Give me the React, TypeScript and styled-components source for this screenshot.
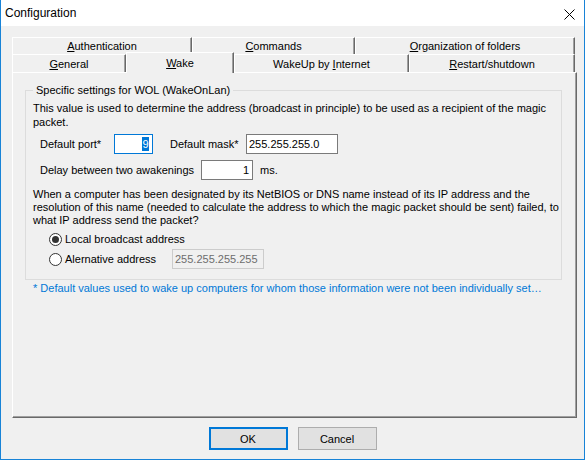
import * as React from 'react';
import styled, { createGlobalStyle } from 'styled-components';

const GlobalStyle = createGlobalStyle`
	html, body {
		margin: 0;
		padding: 0;
		background: #f0f0f0;
	}
	body {
		font-family: 'Liberation Sans', Arial, sans-serif;
		font-size: 11px;
		color: #000;
	}
`;

const topTabs = [
	{ w: 180, label: <><u>A</u>uthentication</> },
	{ w: 163, label: <><u>C</u>ommands</> },
	{ w: 220, label: <><u>O</u>rganization of folders</> },
];

const bottomTabs = [
	{ w: 114, label: <><u>G</u>eneral</> },
	{ w: 108, label: <><u>W</u>ake</>, active: true },
	{ w: 175, label: <>WakeUp by <u>I</u>nternet</> },
	{ w: 166, label: <><u>R</u>estart/shutdown</> },
];

export default function App() {
	return (
		<>
			<GlobalStyle />
			<Window>
				<TitleBar>
					<span>Configuration</span>
					<CloseIcon width="11" height="11" viewBox="0 0 11 11">
						<path d="M0.5 0.5 L10.5 10.5 M10.5 0.5 L0.5 10.5" stroke="#000" strokeWidth="1" />
					</CloseIcon>
				</TitleBar>
				<Body>
					<TabRow $height={17}>
						{topTabs.map((t, i) => (
							<Tab key={i} $width={t.w}>
								<span>{t.label}</span>
							</Tab>
						))}
					</TabRow>
					<TabRow $height={18}>
						{bottomTabs.map((t, i) => (
							<Tab key={i} $width={t.w} $active={t.active}>
								<span>{t.label}</span>
							</Tab>
						))}
					</TabRow>
					<Panel>
						<Group>
							<Legend>Specific settings for WOL (WakeOnLan)</Legend>
							<Para $lh={14} $top={2}>
								This value is used to determine the address (broadcast in principle) to be used as a recipient of the magic
								<br />
								packet.
							</Para>
							<FieldRow $top={5}>
								<Label $width={74}>Default port*</Label>
								<Field $width={39} $focused $right>
									<Selected>9</Selected>
								</Field>
								<Label $width={76} $left={17}>
									Default mask*
								</Label>
								<Field $width={92}>255.255.255.0</Field>
							</FieldRow>
							<FieldRow $top={6}>
								<Label $width={161}>Delay between two awakenings</Label>
								<Field $width={52} $right>
									1
								</Field>
								<Label $left={7}>ms.</Label>
							</FieldRow>
							<Para $lh={13} $top={8}>
								When a computer has been designated by its NetBIOS or DNS name instead of its IP address and the
								<br />
								resolution of this name (needed to calculate the address to which the magic packet should be sent) failed, to
								<br />
								what IP address send the packet?
							</Para>
							<RadioRow $top={2}>
								<Radio $checked />
								<RadioLabel>Local broadcast address</RadioLabel>
							</RadioRow>
							<RadioRow>
								<Radio />
								<RadioLabel $width={107}>Alernative address</RadioLabel>
								<Field $width={92} $disabled>
									255.255.255.255
								</Field>
							</RadioRow>
						</Group>
						<Note>* Default values used to wake up computers for whom those information were not been individually set…</Note>
					</Panel>
					<Buttons>
						<Button $default>OK</Button>
						<Button>Cancel</Button>
					</Buttons>
				</Body>
			</Window>
		</>
	);
}

const Window = styled.div`
	width: 585px;
	height: 460px;
	box-sizing: border-box;
	border: 1px solid #1883d7;
	border-top: none;
	background: #f0f0f0;
	display: flex;
	flex-direction: column;
	overflow: hidden;
`;

const TitleBar = styled.div`
	height: 26px;
	flex-shrink: 0;
	background: #fff;
	display: flex;
	align-items: center;
	justify-content: space-between;
	padding: 0 9px 0 4px;
	font-size: 12px;
`;

const CloseIcon = styled.svg`
	display: block;
	margin-top: 2px;
`;

const Body = styled.div`
	display: flex;
	flex-direction: column;
	padding: 11px 0 0 11px;
`;

const TabRow = styled.div<{ $height: number }>`
	display: flex;
	height: ${p => p.$height}px;
	width: 563px;
`;

const Tab = styled.div<{ $width: number; $active?: boolean }>`
	box-sizing: border-box;
	width: ${p => p.$width}px;
	${p => (p.$active ? 'height: 21px; margin-top: -2px; padding-bottom: 1px;' : '')}
	position: relative;
	z-index: ${p => (p.$active ? 2 : 1)};
	background: #f0f0f0;
	border-top: 1px solid #fff;
	border-left: 1px solid #fff;
	border-right: 1px solid #696969;
	box-shadow: inset -1px 0 #a0a0a0;
	display: flex;
	align-items: center;
	justify-content: center;
	white-space: nowrap;
	line-height: 14px;
	u {
		text-decoration-thickness: 1px;
		text-underline-offset: 1px;
	}
`;

const Panel = styled.div`
	box-sizing: border-box;
	width: 565px;
	height: 346px;
	border-top: 1px solid #fff;
	border-left: 1px solid #fff;
	border-right: 1px solid #696969;
	border-bottom: 1px solid #696969;
	box-shadow: inset -1px -1px #a0a0a0;
	padding: 10px 14px 0 12px;
	display: flex;
	flex-direction: column;
`;

const Group = styled.fieldset`
	margin: 0;
	border: 1px solid #dcdcdc;
	padding: 1px 7px 10px 7px;
	min-width: 0;
`;

const Legend = styled.legend`
	padding: 0 3px;
	line-height: 15px;
	white-space: nowrap;
`;

const Para = styled.p<{ $lh: number; $top?: number }>`
	margin: ${p => p.$top ?? 0}px 0 0;
	line-height: ${p => p.$lh}px;
	white-space: nowrap;
`;

const FieldRow = styled.div<{ $top?: number }>`
	display: flex;
	align-items: center;
	height: 20px;
	margin-top: ${p => p.$top ?? 0}px;
	padding-left: 7px;
`;

const Label = styled.span<{ $width?: number; $left?: number }>`
	${p => (p.$width ? `width: ${p.$width}px;` : '')}
	margin-left: ${p => p.$left ?? 0}px;
	flex-shrink: 0;
	white-space: nowrap;
`;

const Field = styled.div<{ $width: number; $focused?: boolean; $right?: boolean; $disabled?: boolean }>`
	box-sizing: border-box;
	width: ${p => p.$width}px;
	height: 20px;
	flex-shrink: 0;
	display: flex;
	align-items: center;
	justify-content: ${p => (p.$right ? 'flex-end' : 'flex-start')};
	padding: 0 3px 0 2px;
	background: ${p => (p.$disabled ? '#f0f0f0' : '#fff')};
	color: ${p => (p.$disabled ? '#6d6d6d' : '#000')};
	border: 1px solid ${p => (p.$focused ? '#0078d7' : p.$disabled ? '#cccccc' : '#7a7a7a')};
	white-space: nowrap;
`;

const Selected = styled.span`
	background: #0078d7;
	color: #fff;
	line-height: 14px;
	padding: 0 0.5px;
`;

const RadioRow = styled.div<{ $top?: number }>`
	display: flex;
	align-items: center;
	height: 20px;
	margin-top: ${p => p.$top ?? 0}px;
	padding-left: 16px;
`;

const Radio = styled.span<{ $checked?: boolean }>`
	box-sizing: border-box;
	width: 13px;
	height: 13px;
	flex-shrink: 0;
	border-radius: 50%;
	border: 1px solid #333;
	background: #fff;
	display: flex;
	align-items: center;
	justify-content: center;
	&::after {
		content: '';
		width: 7px;
		height: 7px;
		border-radius: 50%;
		background: ${p => (p.$checked ? '#333' : 'transparent')};
	}
`;

const RadioLabel = styled.span<{ $width?: number }>`
	margin-left: 3px;
	${p => (p.$width ? `width: ${p.$width}px;` : '')}
	flex-shrink: 0;
	white-space: nowrap;
`;

const Note = styled.div`
	margin: 1px 0 0 8px;
	color: #0078d7;
	line-height: 14px;
	white-space: nowrap;
`;

const Buttons = styled.div`
	display: flex;
	justify-content: center;
	gap: 10px;
	margin: 9px 0 0 -11px;
`;

const Button = styled.div<{ $default?: boolean }>`
	box-sizing: border-box;
	width: 79px;
	height: 23px;
	display: flex;
	align-items: center;
	justify-content: center;
	background: #e1e1e1;
	border: ${p => (p.$default ? '2px solid #0078d7' : '1px solid #adadad')};
`;
